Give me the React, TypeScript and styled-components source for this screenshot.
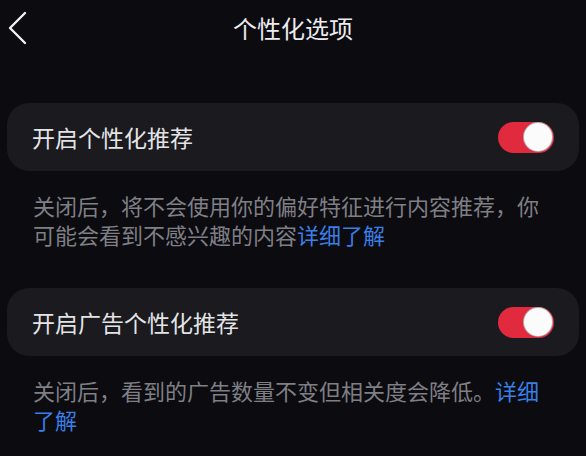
import styled, { createGlobalStyle } from "styled-components";

const GlobalStyle = createGlobalStyle`
  html, body {
    margin: 0;
    padding: 0;
    background: #0b0b10;
  }
  body {
    font-family: "Noto Sans CJK SC", "Noto Sans", sans-serif;
    -webkit-font-smoothing: antialiased;
  }
`;

const Page = styled.div`
  width: 586px;
  min-height: 456px;
  background: #0b0b10;
  color: #e6e6e8;
  overflow: hidden;
`;

const Header = styled.header`
  height: 56px;
  display: grid;
  grid-template-columns: 60px 1fr 60px;
  align-items: center;
`;

const BackButton = styled.button`
  background: none;
  border: none;
  padding: 0 0 0 8px;
  height: 56px;
  display: flex;
  align-items: center;
  color: #f2f2f2;
  cursor: pointer;
`;

const Title = styled.h1`
  margin: 0;
  text-align: center;
  font-size: 24px;
  font-weight: 400;
  line-height: 56px;
  color: #ececee;
`;

const Content = styled.main`
  padding: 47px 7px 0;
  display: flex;
  flex-direction: column;
`;

const SettingCard = styled.div`
  height: 68px;
  border-radius: 22px;
  background: #1a1a1f;
  display: flex;
  align-items: center;
  justify-content: space-between;
  padding: 0 25px 0 25px;
  box-sizing: border-box;
`;

const SettingLabel = styled.span`
  font-size: 23px;
  line-height: 1;
  color: #e4e4e6;
`;

const Toggle = styled.button<{ $on: boolean }>`
  width: 56px;
  height: 31px;
  border-radius: 16px;
  border: none;
  padding: 2px;
  background: ${p => (p.$on ? "#e12a3d" : "#3a3a40")};
  display: flex;
  justify-content: ${p => (p.$on ? "flex-end" : "flex-start")};
  align-items: center;
  cursor: pointer;
  box-sizing: border-box;
`;

const Knob = styled.span`
  width: 28px;
  height: 28px;
  border-radius: 50%;
  background: #fbfbfb;
  box-shadow: 0 0 0 1px #b9a8aa;
`;

const Description = styled.p<{ $gapAfter: number }>`
  margin: 20px 0 ${p => p.$gapAfter}px;
  padding: 0 26px;
  font-size: 22px;
  line-height: 29px;
  color: #7f7f85;
`;

const Link = styled.a`
  color: #3a7ee6;
  text-decoration: none;
`;

function ChevronLeft() {
  return (
    <svg width="20" height="34" viewBox="0 0 20 34" fill="none">
      <path
        d="M17 2 L2 17 L17 32"
        stroke="currentColor"
        strokeWidth="2.4"
        strokeLinecap="round"
        strokeLinejoin="round"
      />
    </svg>
  );
}

export default function App() {
  return (
    <Page>
      <GlobalStyle />
      <Header>
        <BackButton aria-label="返回">
          <ChevronLeft />
        </BackButton>
        <Title>个性化选项</Title>
        <span />
      </Header>
      <Content>
        <SettingCard>
          <SettingLabel>开启个性化推荐</SettingLabel>
          <Toggle $on aria-label="开启个性化推荐">
            <Knob />
          </Toggle>
        </SettingCard>
        <Description $gapAfter={39}>
          关闭后，将不会使用你的偏好特征进行内容推荐，你可能会看到不感兴趣的内容
          <Link href="#">详细了解</Link>
        </Description>
        <SettingCard>
          <SettingLabel>开启广告个性化推荐</SettingLabel>
          <Toggle $on aria-label="开启广告个性化推荐">
            <Knob />
          </Toggle>
        </SettingCard>
        <Description $gapAfter={0}>
          关闭后，看到的广告数量不变但相关度会降低。<Link href="#">详细了解</Link>
        </Description>
      </Content>
    </Page>
  );
}
